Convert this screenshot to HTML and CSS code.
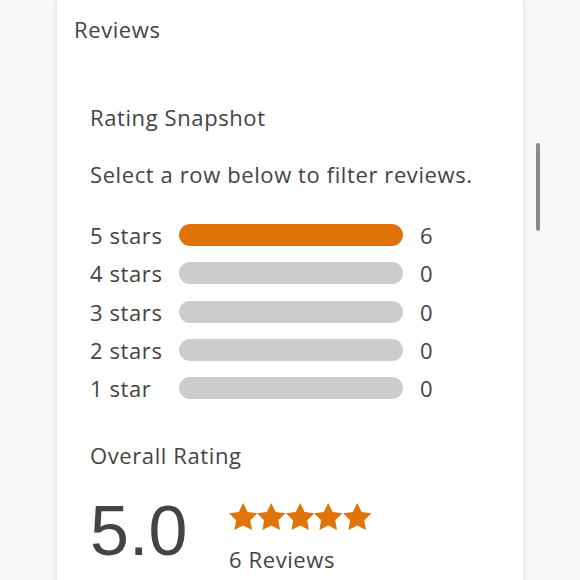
FILE: index.html
```html
<!DOCTYPE html>
<html lang="en">
<head>
<meta charset="utf-8">
<title>Reviews</title>
<link rel="stylesheet" href="styles.css">
</head>
<body>
<div class="page">
  <div class="card">
    <h2 class="title">Reviews</h2>
    <div class="snapshot">
      <h3 class="heading">Rating Snapshot</h3>
      <p class="hint">Select a row below to filter reviews.</p>
      <ul class="rows">
        <li class="row"><span class="label">5 stars</span><span class="bar"><span class="fill" style="width:100%"></span></span><span class="count">6</span></li>
        <li class="row"><span class="label">4 stars</span><span class="bar"><span class="fill" style="width:0%"></span></span><span class="count">0</span></li>
        <li class="row"><span class="label">3 stars</span><span class="bar"><span class="fill" style="width:0%"></span></span><span class="count">0</span></li>
        <li class="row"><span class="label">2 stars</span><span class="bar"><span class="fill" style="width:0%"></span></span><span class="count">0</span></li>
        <li class="row"><span class="label">1 star</span><span class="bar"><span class="fill" style="width:0%"></span></span><span class="count">0</span></li>
      </ul>
      <h3 class="heading overall">Overall Rating</h3>
      <div class="score">
        <span class="big">5.0</span>
        <div class="meta">
          <div class="stars">
            <svg class="star" viewBox="2 2 20 19.02"><path d="M12 2l3.09 6.26L22 9.27l-5 4.87 1.18 6.88L12 17.77l-6.18 3.25L7 14.14 2 9.27l6.91-1.01L12 2z"/></svg>
            <svg class="star" viewBox="2 2 20 19.02"><path d="M12 2l3.09 6.26L22 9.27l-5 4.87 1.18 6.88L12 17.770l-6.18 3.25L7 14.14 2 9.27l6.91-1.01L12 2z"/></svg>
            <svg class="star" viewBox="2 2 20 19.02"><path d="M12 2l3.09 6.26L22 9.27l-5 4.87 1.18 6.88L12 17.77l-6.18 3.25L7 14.14 2 9.27l6.91-1.01L12 2z"/></svg>
            <svg class="star" viewBox="2 2 20 19.02"><path d="M12 2l3.09 6.26L22 9.27l-5 4.87 1.18 6.88L12 17.77l-6.18 3.25L7 14.14 2 9.27l6.91-1.01L12 2z"/></svg>
            <svg class="star" viewBox="2 2 20 19.02"><path d="M12 2l3.09 6.26L22 9.27l-5 4.87 1.18 6.88L12 17.77l-6.18 3.25L7 14.14 2 9.27l6.91-1.01L12 2z"/></svg>
          </div>
          <div class="total">6 Reviews</div>
        </div>
      </div>
    </div>
  </div>
</div>
<div class="scrollthumb"></div>
</body>
</html>
```
FILE: styles.css
```css
html, body {
  margin: 0;
  padding: 0;
  height: 100%;
  overflow: hidden;
}
body {
  background: #f8f8f8;
  font-family: "Open Sans", "Noto Sans", sans-serif;
  color: #444444;
  letter-spacing: 0.6px;
}
.page {
  padding-left: 57px;
  height: 100%;
}
.card {
  width: 466px;
  min-height: 640px;
  background: #ffffff;
  box-shadow: 0 0 6px rgba(0, 0, 0, 0.12);
  padding: 14px 0 0 17px;
  box-sizing: border-box;
}
.title {
  margin: 0;
  font-size: 22px;
  font-weight: 400;
  line-height: 30px;
}
.snapshot {
  padding-left: 16px;
  display: flex;
  flex-direction: column;
}
.heading {
  margin: 58px 0 0;
  font-size: 22px;
  font-weight: 400;
  line-height: 30px;
}
.hint {
  margin: 27px 0 0;
  font-size: 22px;
  line-height: 30px;
}
.rows {
  list-style: none;
  margin: 27px 0 0;
  padding: 0;
}
.row {
  display: flex;
  align-items: center;
  height: 38.3px;
  font-size: 22px;
}
.label {
  width: 89px;
}
.bar {
  width: 224px;
  height: 22px;
  border-radius: 11px;
  background: #cccccc;
  overflow: hidden;
  display: block;
}
.fill {
  display: block;
  height: 100%;
  background: #e07408;
  border-radius: 11px;
}
.count {
  margin-left: 17px;
}
.overall {
  margin-top: 33px;
}
.score {
  display: flex;
  align-items: flex-start;
  margin-top: 21px;
}
.big {
  font-family: "Liberation Sans", Arial, sans-serif;
  font-size: 70px;
  line-height: 80px;
  letter-spacing: 0;
  color: #444444;
  width: 139px;
}
.meta {
  display: flex;
  flex-direction: column;
  padding-top: 12px;
}
.stars {
  display: flex;
  height: 27px;
}
.star {
  width: 28.4px;
  height: 27px;
  fill: #e07408;
  display: block;
}
.total {
  margin-top: 14px;
  font-size: 22px;
  line-height: 30px;
}
.scrollthumb {
  position: absolute;
  left: 536px;
  top: 143px;
  width: 4px;
  height: 88px;
  border-radius: 2px;
  background: #8a8a8a;
}
```
